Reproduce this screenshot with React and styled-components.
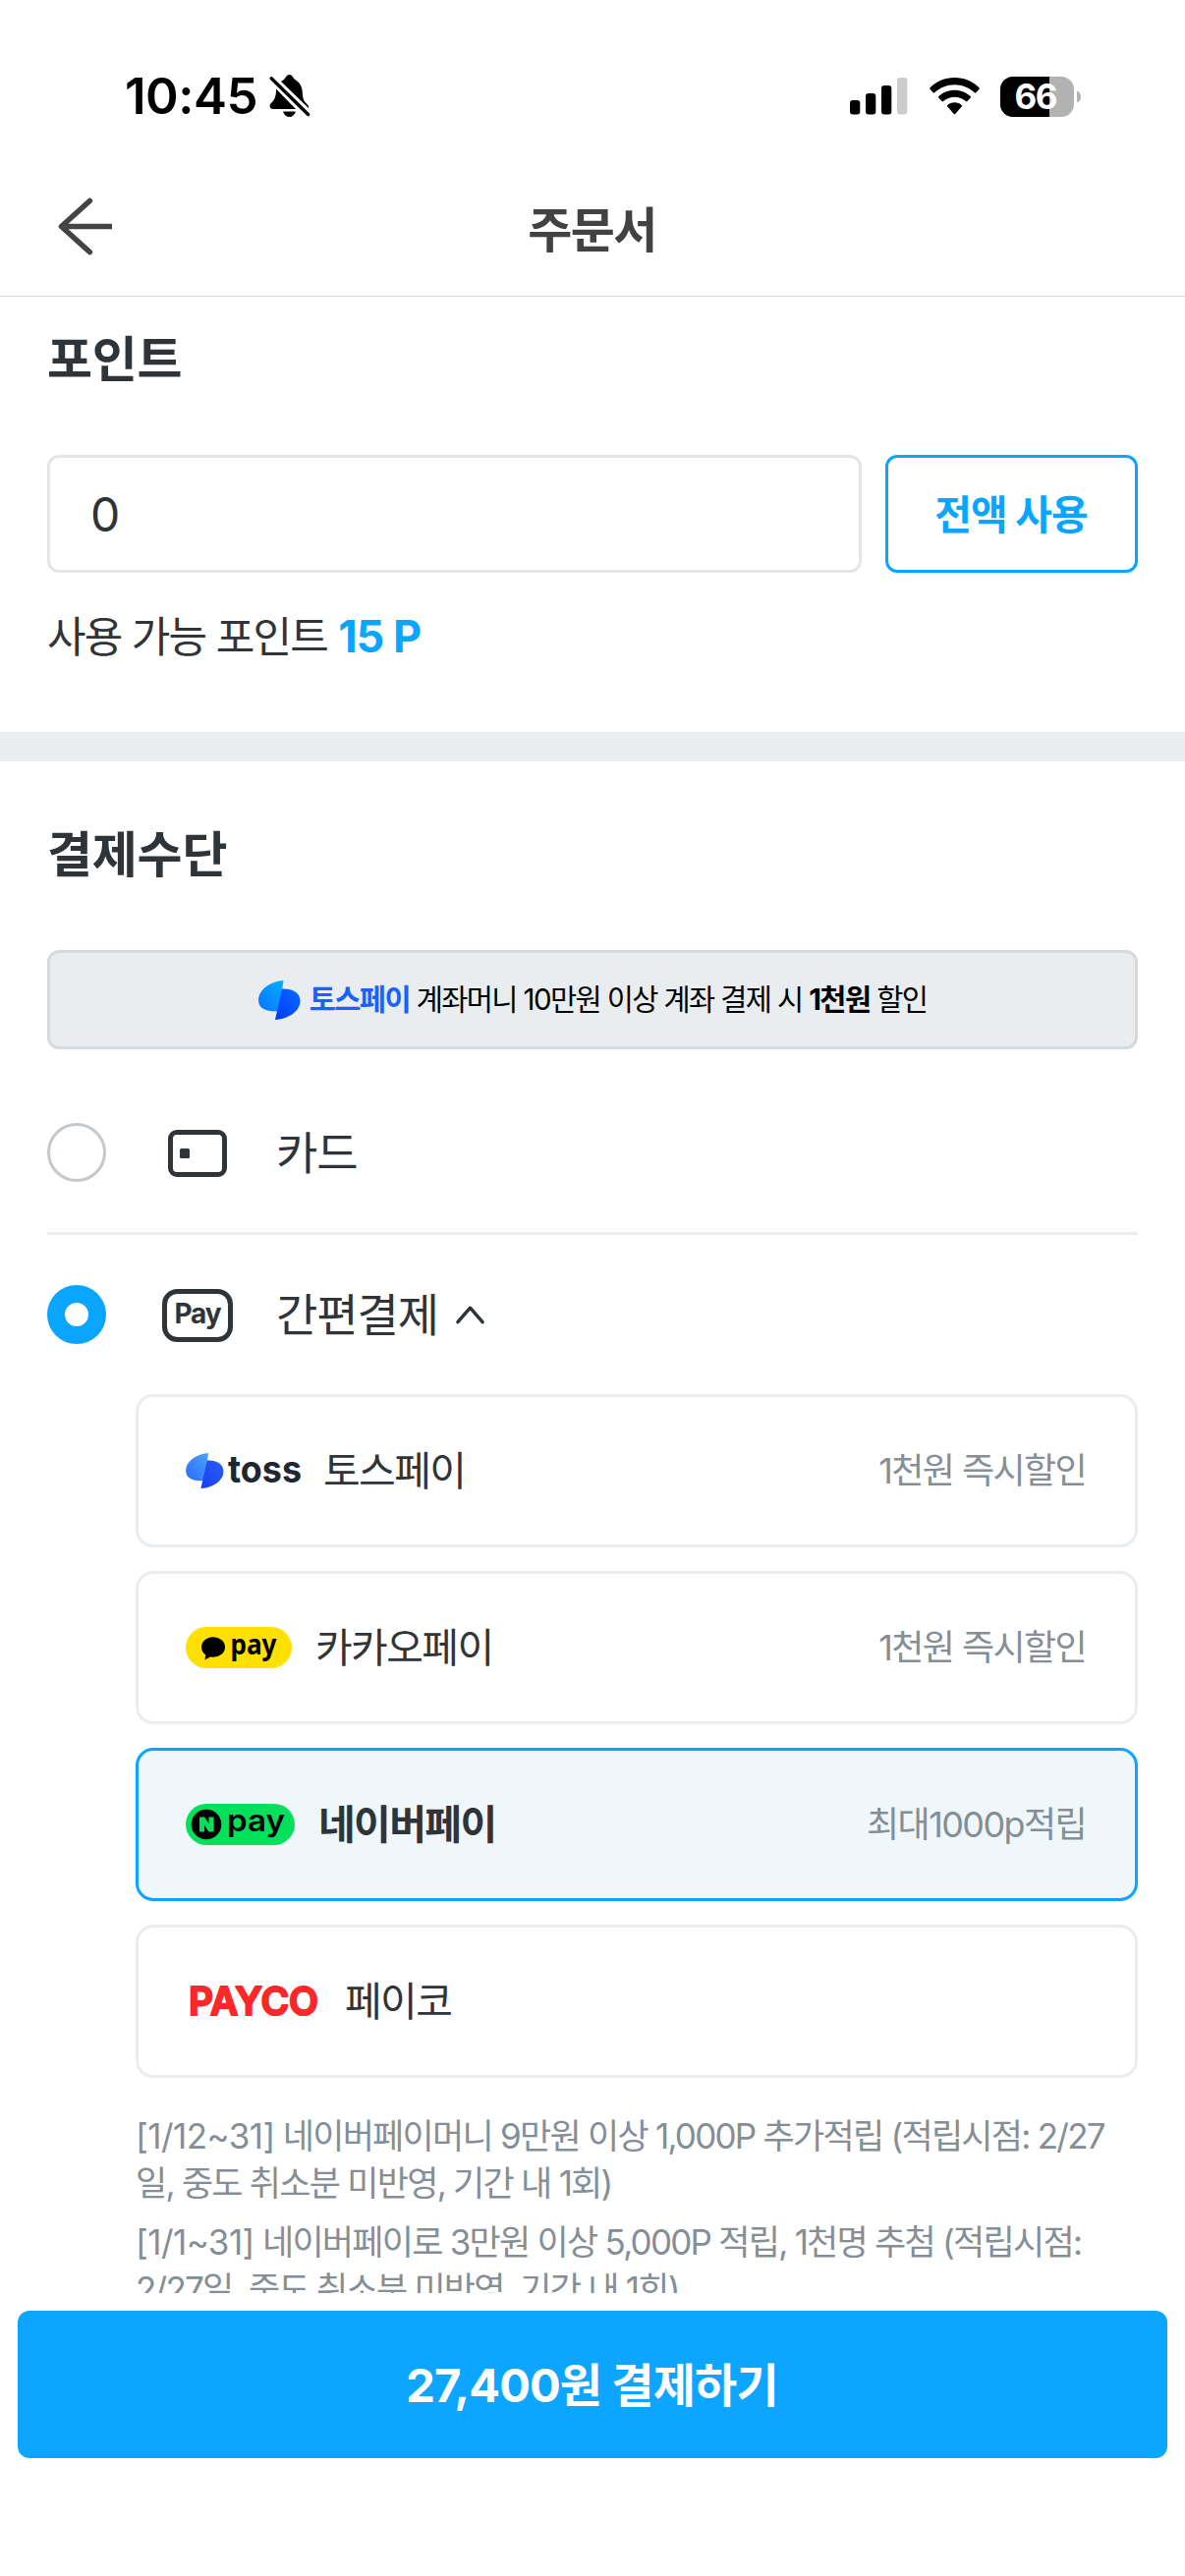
import React, { useState } from 'react';
import styled, { createGlobalStyle } from 'styled-components';

const GlobalStyle = createGlobalStyle`
  * {
    box-sizing: border-box;
  }
  body {
    margin: 0;
    background: #fff;
    color: #2f3438;
    font-family: Inter, 'Noto Sans CJK KR', sans-serif;
  }
  button, input {
    font-family: inherit;
    margin: 0;
  }
  svg {
    flex-shrink: 0;
    overflow: visible;
  }
`;

const Screen = styled.div`
  width: 1206px;
  height: 2622px;
  display: flex;
  flex-direction: column;
  background: #fff;
  overflow: hidden;
`;

const StatusBar = styled.div`
  height: 162px;
  padding: 36px 106px 0 127px;
  display: flex;
  align-items: flex-start;
  justify-content: space-between;
`;

const StatusGroup = styled.div`
  height: 124px;
  display: flex;
  align-items: center;
  gap: ${props => props.$gap || 0}px;
`;

const Clock = styled.span`
  font-size: 51px;
  font-weight: 600;
  line-height: 60px;
  letter-spacing: -0.5px;
  color: #000;
  width: 147px;
  white-space: nowrap;
`;

const Header = styled.header`
  height: 140px;
  display: grid;
  grid-template-columns: 120px 1fr 120px;
  align-items: center;
  border-bottom: 1px solid #d8d8d8;
`;

const BackButton = styled.button`
  border: 0;
  padding: 0 0 3px 58px;
  background: none;
  display: flex;
`;

const HeaderTitle = styled.h1`
  margin: 7px 1px 0 0;
  text-align: center;
  font-size: 49px;
  font-weight: 700;
  line-height: 60px;
  letter-spacing: -1.5px;
  color: #424242;
`;

const Content = styled.main`
  height: 2032px;
  flex-shrink: 0;
  overflow: hidden;
`;

const Section = styled.section`
  padding: ${props => props.$top}px 48px 0;
`;

const SectionTitle = styled.h2`
  margin: 0;
  font-size: 50px;
  font-weight: 700;
  line-height: 60px;
  letter-spacing: -0.2px;
`;

const PointRow = styled.div`
  display: flex;
  gap: 24px;
  margin-top: 67px;
`;

const PointInput = styled.input`
  width: 829px;
  height: 120px;
  flex-shrink: 0;
  padding: 0 41px;
  border: 3px solid #e5e5e5;
  border-radius: 12px;
  background: #fff;
  color: #2f3438;
  font-size: 48px;
  outline: none;
`;

const UseAllButton = styled.button`
  flex: 1;
  height: 120px;
  padding: 0 1px 5px 0;
  border: 3px solid #0aa5ff;
  border-radius: 12px;
  background: #fff;
  color: #0aa5ff;
  font-size: 41px;
  font-weight: 700;
  letter-spacing: -1px;
`;

const PointInfo = styled.p`
  margin: 35px 0 0;
  font-size: 43px;
  line-height: 60px;
  letter-spacing: -1.8px;

  strong {
    margin-left: 1px;
    color: #0aa5ff;
    font-size: 45px;
    letter-spacing: -1px;
  }
`;

const Divider = styled.div`
  height: 30px;
  margin-top: 67px;
  background: #e9edf0;
`;

const Banner = styled.div`
  height: 101px;
  margin-top: 67px;
  border: 3px solid #d6dadd;
  border-radius: 12px;
  background: #e9edf0;
  color: #000;
  display: flex;
  align-items: center;
  justify-content: center;
`;

const BannerText = styled.span`
  margin-left: 9px;
  padding-bottom: 2px;
  font-size: 29.5px;
  line-height: 40px;
  letter-spacing: -1.6px;
  white-space: nowrap;

  em {
    font-style: normal;
    font-weight: 700;
    color: #1a62ff;
  }
`;

const MethodRow = styled.div`
  height: ${props => props.$height}px;
  padding-top: ${props => props.$pad || 0}px;
  display: flex;
  align-items: center;
  border-bottom: ${props => (props.$line ? '3px solid #e9edf0' : '0')};
`;

const Radio = styled.span`
  width: 60px;
  height: 60px;
  border-radius: 50%;
  border: ${props => (props.$checked ? '18px solid #0aa5ff' : '3px solid #c3c9cd')};
  background: #fff;
`;

const MethodIcon = styled.span`
  width: 72px;
  margin: 1px 44px 0 57px;
  display: flex;
  justify-content: center;
`;

const MethodName = styled.span`
  font-size: 46px;
  line-height: 60px;
  letter-spacing: -1.1px;
`;

const Caret = styled.svg`
  margin-left: 18px;
`;

const PayList = styled.div`
  display: flex;
  flex-direction: column;
  gap: 24px;
  padding-left: 90px;
`;

const PayItem = styled.div`
  height: 156px;
  padding: 0 50px 0 48px;
  display: flex;
  align-items: center;
  border: 3px solid ${props => (props.$active ? '#0aa5ff' : '#e9edf0')};
  border-radius: 18px;
  background: ${props => (props.$active ? '#eff7fb' : '#fff')};
`;

const PayName = styled.span`
  margin-left: ${props => props.$gap}px;
  font-size: 41px;
  font-weight: ${props => (props.$active ? 700 : 400)};
  line-height: 60px;
  letter-spacing: -1.6px;
`;

const Benefit = styled.span`
  margin-left: auto;
  font-size: 36px;
  line-height: 50px;
  letter-spacing: -1.6px;
  color: #848e96;
`;

const Notes = styled.div`
  padding: 35px 0 0 90px;
`;

const Note = styled.p`
  margin: 0 0 12px;
  font-size: 35px;
  line-height: 48px;
  letter-spacing: -1.75px;
  color: #848e96;
  white-space: nowrap;
`;

const Period = styled.span`
  letter-spacing: -0.55px;
`;

const Footer = styled.footer`
  padding: 18px;
`;

const PayButton = styled.button`
  width: 100%;
  height: 150px;
  padding: 0 1px 5px 0;
  border: 0;
  border-radius: 12px;
  background: #0ca5ff;
  color: #fff;
  font-size: 47px;
  font-weight: 700;
  letter-spacing: -0.9px;
`;

const BellOffIcon = () => (
  <svg width="42" height="44" viewBox="0 0 42 44">
    <path d="M12 7c2-1.500 3.500-2 4.500-4C17.500 1 19 0 20.500 0s3 1 4 3c1 2 3 2.500 5 4.500 3.500 3.500 4.300 8 4.500 13 .2 4 1.500 7 4 9 1.800 1.500 2.500 3 2 4.500z" />
    <path d="M7 14.500L27 35H4C.5 35-.3 31.500 1.500 29.500 5.500 26 7.300 21 7 14.500z" />
    <path d="M14 37.500h13c-1 3.500-3.500 5.500-6.500 5.500S15 41 14 37.500z" />
    <path d="M2.200 3.800L39.600 40.500" stroke="#fff" strokeWidth="7" />
    <path d="M2.200 3.800L39.600 40.500" stroke="#000" strokeWidth="3.400" strokeLinecap="round" />
  </svg>
);

const SignalIcon = () => (
  <svg width="59" height="38" viewBox="0 0 59 38">
    <rect x="0" y="23" width="10.300" height="14.500" rx="3" />
    <rect x="16" y="16" width="10.300" height="21.500" rx="3" />
    <rect x="32" y="8" width="10.300" height="29.500" rx="3" />
    <rect x="48" y="0" width="10.300" height="37.500" rx="3" fill="#ccc" />
  </svg>
);

const WifiIcon = () => (
  <svg width="51" height="38" viewBox="0 0 51 38">
    <path d="M25.500 0C35.500 0 44.300 4 50.500 10.300c.5.500.5 1 0 1.500l-3.200 3.400c-.5.500-1 .5-1.500 0C40.500 10.200 33.500 7.200 25.500 7.200S10.500 10.200 5.200 15.200c-.5.500-1 .5-1.500 0L.5 11.800c-.5-.5-.5-1 0-1.500C6.700 4 15.500 0 25.500 0z" />
    <path d="M25.500 12.700c6.300 0 12 2.400 16.200 6.400.5.500.5 1 0 1.500l-3.300 3.500c-.5.500-1 .5-1.500 0-3-2.700-7-4.400-11.400-4.400s-8.400 1.700-11.400 4.400c-.5.500-1 .5-1.500 0l-3.300-3.500c-.5-.5-.5-1 0-1.500 4.200-4 9.900-6.400 16.200-6.400z" />
    <path d="M25.500 25.300c2.800 0 5.200 1 7.200 2.600.5.500.5 1 0 1.500l-6.300 7.300c-.6.700-1.200.7-1.800 0l-6.300-7.300c-.5-.5-.5-1 0-1.500 2-1.600 4.400-2.600 7.200-2.600z" />
  </svg>
);

const BatteryIcon = () => (
  <svg width="82" height="41" viewBox="0 0 82 41">
    <defs>
      <clipPath id="battery">
        <rect width="75" height="41" rx="13" />
      </clipPath>
    </defs>
    <g clipPath="url(#battery)">
      <rect width="75" height="41" fill="#b2b2b2" />
      <rect width="50" height="41" />
    </g>
    <path d="M78 14.500c2.800 1 4 3.300 4 6s-1.200 5-4 6z" fill="#b2b2b2" />
    <text x="36.500" y="33" fontSize="35" fontWeight="700" fill="#fff" textAnchor="middle" textLength="44">66</text>
  </svg>
);

const ArrowLeft = () => (
  <svg width="58" height="60" viewBox="0 0 58 60" fill="none" stroke="#444" strokeWidth="5.600">
    <path d="M33.300 4.500L4.500 30.500l28.800 26" strokeLinecap="round" strokeLinejoin="round" />
    <path d="M5 30.500h51" />
  </svg>
);

const TossMark = ({ width, height, id, colors }) => (
  <svg width={width} height={height} viewBox="0 0 43 40">
    <defs>
      <linearGradient id={`${id}-l`} x1="1" y1="0" x2="0" y2="1">
        <stop offset="0" stopColor={colors[0]} />
        <stop offset="1" stopColor={colors[1]} />
      </linearGradient>
      <linearGradient id={`${id}-r`} x1="1" y1="0" x2="0" y2="1">
        <stop offset="0" stopColor={colors[2]} />
        <stop offset="1" stopColor={colors[3]} />
      </linearGradient>
    </defs>
    <path d="M25.500 0L21 31.300c-12 .8-21-2.300-21-11.300C0 10 11 1 25.500 0z" fill={`url(#${id}-l)`} />
    <path d="M24 8.500c11-.5 18.500 4 18.500 12.500 0 9.500-11 18-25.500 19z" fill={`url(#${id}-r)`} />
  </svg>
);

const CardIcon = () => (
  <svg width="60" height="48" viewBox="0 0 60 48">
    <rect x="2.500" y="2.500" width="55" height="43" rx="6.500" fill="none" stroke="#2f3438" strokeWidth="5" />
    <rect x="12" y="19" width="10" height="10" rx="1.500" fill="#2f3438" />
  </svg>
);

const PayIcon = () => (
  <svg width="72" height="54" viewBox="0 0 72 54">
    <rect x="2.500" y="2.500" width="67" height="49" rx="13" fill="none" stroke="#2f3438" strokeWidth="5" />
    <text x="12.500" y="35" fontSize="28" fontWeight="700" fill="#2f3438" textLength="48">Pay</text>
  </svg>
);

const TossLogo = () => (
  <svg width="118" height="42" viewBox="0 0 118 42">
    <g transform="translate(0 3)">
      <TossMark id="toss" width="39" height="36" colors={['#4ba3ff', '#2b6cf5', '#2a5cf0', '#1740f5']} />
    </g>
    <text x="43" y="33" fontSize="38" fontWeight="700" fill="#202632" textLength="75" lengthAdjust="spacingAndGlyphs">toss</text>
  </svg>
);

const KakaoLogo = () => (
  <svg width="108" height="42" viewBox="0 0 108 42">
    <rect width="108" height="42" rx="21" fill="#ffe000" />
    <ellipse cx="28" cy="20.500" rx="12" ry="10.300" />
    <path d="M20.500 26l-1 7.500 9-5z" />
    <text x="45.500" y="27.500" fontFamily="'Noto Sans', sans-serif" fontSize="29" fontWeight="700" textLength="47" lengthAdjust="spacingAndGlyphs">pay</text>
  </svg>
);

const NaverLogo = () => (
  <svg width="111" height="42" viewBox="0 0 111 42">
    <rect width="111" height="42" rx="21" fill="#03e05b" />
    <circle cx="21" cy="21" r="15.300" />
    <path d="M14 13.500h5.200l4.300 6.800v-6.800h5v15h-5.200L19 21.800v6.700h-5z" fill="#03e05b" />
    <text x="42" y="28" fontSize="31" fontWeight="600" textLength="59" lengthAdjust="spacingAndGlyphs">pay</text>
  </svg>
);

const PaycoLogo = () => (
  <svg width="140" height="42" viewBox="0 0 140 42">
    <text
      x="3"
      y="35.300"
      fontSize="40"
      fontWeight="600"
      fill="#fa2828"
      stroke="#fa2828"
      strokeWidth="2.200"
      strokeLinejoin="round"
      textLength="132"
      lengthAdjust="spacingAndGlyphs"
    >
      PAYCO
    </text>
  </svg>
);

const payments = [
  { id: 'toss', name: '토스페이', benefit: '1천원 즉시할인', Logo: TossLogo, gap: 22 },
  { id: 'kakao', name: '카카오페이', benefit: '1천원 즉시할인', Logo: KakaoLogo, gap: 24 },
  { id: 'naver', name: '네이버페이', benefit: '최대1000p적립', Logo: NaverLogo, gap: 24 },
  { id: 'payco', name: '페이코', benefit: '', Logo: PaycoLogo, gap: 22 },
];

const App = () => {
  const [point, setPoint] = useState('0');
  const [selected, setSelected] = useState('naver');

  return (
    <Screen>
      <GlobalStyle />
      <StatusBar>
        <StatusGroup>
          <Clock>10:45</Clock>
          <BellOffIcon />
        </StatusGroup>
        <StatusGroup $gap={21.5}>
          <SignalIcon />
          <WifiIcon />
          <BatteryIcon />
        </StatusGroup>
      </StatusBar>

      <Header>
        <BackButton aria-label="뒤로">
          <ArrowLeft />
        </BackButton>
        <HeaderTitle>주문서</HeaderTitle>
      </Header>

      <Content>
        <Section $top={34}>
          <SectionTitle>포인트</SectionTitle>
          <PointRow>
            <PointInput value={point} onChange={e => setPoint(e.target.value)} />
            <UseAllButton onClick={() => setPoint('15')}>전액 사용</UseAllButton>
          </PointRow>
          <PointInfo>
            사용 가능 포인트 <strong>15 P</strong>
          </PointInfo>
        </Section>

        <Divider />

        <Section $top={65}>
          <SectionTitle>결제수단</SectionTitle>
          <Banner>
            <TossMark id="banner" width="43" height="40" colors={['#04b0ff', '#0a72ff', '#0a6cff', '#0038ff']} />
            <BannerText>
              <em>토스페이</em> 계좌머니 10만원 이상 계좌 결제 시 <b>1천원</b> 할인
            </BannerText>
          </Banner>

          <MethodRow $height={189} $pad={24} $line>
            <Radio />
            <MethodIcon>
              <CardIcon />
            </MethodIcon>
            <MethodName>카드</MethodName>
          </MethodRow>
          <MethodRow $height={162}>
            <Radio $checked />
            <MethodIcon>
              <PayIcon />
            </MethodIcon>
            <MethodName>간편결제</MethodName>
            <Caret width="29" height="20" viewBox="0 0 30 20" fill="none" stroke="#2f3438" strokeWidth="3.600">
              <path d="M2 18L15 3l13 15" strokeLinecap="round" strokeLinejoin="round" />
            </Caret>
          </MethodRow>

          <PayList>
            {payments.map(({ id, name, benefit, Logo, gap }) => (
              <PayItem key={id} $active={selected === id} onClick={() => setSelected(id)}>
                <Logo />
                <PayName $gap={gap} $active={selected === id}>{name}</PayName>
                {benefit && <Benefit>{benefit}</Benefit>}
              </PayItem>
            ))}
          </PayList>

          <Notes>
            <Note>
              <Period>[1/12~31]</Period> 네이버페이머니 9만원 이상 1,000P 추가적립 (적립시점: 2/27
              <br />
              일, 중도 취소분 미반영, 기간 내 1회)
            </Note>
            <Note>
              <Period>[1/1~31]</Period> 네이버페이로 3만원 이상 5,000P 적립, 1천명 추첨 (적립시점:
              <br />
              2/27일, 중도 취소분 미반영, 기간 내 1회)
            </Note>
          </Notes>
        </Section>
      </Content>

      <Footer>
        <PayButton>27,400원 결제하기</PayButton>
      </Footer>
    </Screen>
  );
};

export default App;
